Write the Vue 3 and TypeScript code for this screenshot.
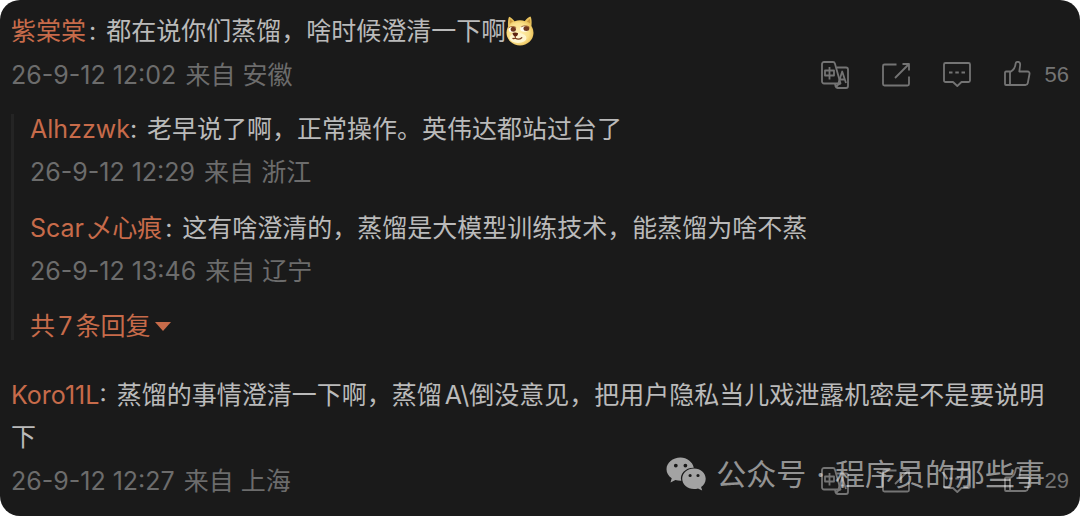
<script setup lang="ts">
interface Reply {
  id: number
  user: string
  cjkName: boolean
  text: string
  time: string
  region: string
}

interface Comment extends Reply {
  doge: boolean
  likes: number
  replies: Reply[]
  replyTotal: number
}

const comments: Comment[] = [
  {
    id: 1,
    user: '紫棠棠',
    cjkName: true,
    text: '都在说你们蒸馏，啥时候澄清一下啊',
    doge: true,
    time: '26-9-12 12:02',
    region: '安徽',
    likes: 56,
    replyTotal: 7,
    replies: [
      {
        id: 11,
        user: 'Alhzzwk',
        cjkName: false,
        text: '老早说了啊，正常操作。英伟达都站过台了',
        time: '26-9-12 12:29',
        region: '浙江',
      },
      {
        id: 12,
        user: 'Scar乄心痕',
        cjkName: true,
        text: '这有啥澄清的，蒸馏是大模型训练技术，能蒸馏为啥不蒸',
        time: '26-9-12 13:46',
        region: '辽宁',
      },
    ],
  },
  {
    id: 2,
    user: 'Koro11L',
    cjkName: false,
    text: '蒸馏的事情澄清一下啊，蒸馏A\\倒没意见，把用户隐私当儿戏泄露机密是不是要说明下',
    doge: false,
    time: '26-9-12 12:27',
    region: '上海',
    likes: 29,
    replyTotal: 0,
    replies: [],
  },
]
</script>

<template>
  <main class="card">
    <article v-for="c in comments" :key="c.id" class="comment">
      <p class="body">
        <a href="#" class="user">{{ c.user }}</a><span class="colon" :class="{ wide: c.cjkName }">:</span>{{ c.text }}<svg
          v-if="c.doge" class="doge" viewBox="0 0 28 30" role="img" aria-label="doge">
          <defs>
            <radialGradient id="fur" cx="45%" cy="50%" r="58%">
              <stop offset="0" stop-color="#fff0b5" />
              <stop offset="0.65" stop-color="#fae08a" />
              <stop offset="1" stop-color="#e8bc52" />
            </radialGradient>
          </defs>
          <path d="M2 11C1.800 6 2.200 2 3.200 .8 5 1.500 7.500 3.500 9 6ZM18.500 5.500C20.500 3 23 .8 24.500 .6c1.200 2 1.400 6 .8 10.400Z" fill="#e9c35e" />
          <path d="M3.800 7.500C3.700 5.300 3.800 4 4.200 3.200 5.400 3.800 6.400 4.900 7 5.800ZM21 5.800c.9-1.400 2-2.400 2.900-2.700.4 1.200.5 2.700.3 4.300Z" fill="#c9983f" />
          <ellipse cx="14" cy="16.800" rx="13.500" ry="12.600" fill="url(#fur)" />
          <ellipse cx="12" cy="22" rx="8.500" ry="5" fill="#fff6cf" />
          <ellipse cx="6.300" cy="13.500" rx="3.600" ry="2.900" fill="#fffdf2" />
          <ellipse cx="18.500" cy="12.800" rx="4.300" ry="3" fill="#fffdf2" />
          <ellipse cx="7.300" cy="13.300" rx="2.600" ry="2.500" fill="#70371f" />
          <ellipse cx="20.400" cy="12.500" rx="2.900" ry="2.500" fill="#70371f" />
          <path d="M3 11.500c1.500-1.200 4.500-1.600 6.800-.2M15.500 10.700c2.200-1.400 5.500-1.300 7.700.3" fill="none" stroke="#a66b36" stroke-width="1" stroke-linecap="round" />
          <path d="M6.500 17c1.500-.9 4-.8 5.600.2-.2 2.100-1.500 3.300-2.800 3.300S6.800 19.200 6.500 17Z" fill="#5c2413" />
          <path d="M9.300 20v2.200c2.200 1.300 4.700 1 6.500-.5M9.300 22.200c-.9.500-1.600.5-2.400.2" fill="none" stroke="#7a3b1d" stroke-width="1.200" stroke-linecap="round" />
        </svg>
      </p>

      <div class="foot">
        <div class="meta"><time>{{ c.time }}</time> 来自 {{ c.region }}</div>
        <div class="actions">
          <button type="button" aria-label="翻译">
            <svg viewBox="0 0 28 28">
              <path d="M14.500 22.500H3A2 2 0 0 1 1 20.500V3A2 2 0 0 1 3 1h9a2 2 0 0 1 1.900 1.400l5.600 20.100Z" />
              <path d="M15.500 6.500H25a2 2 0 0 1 2 2V25a2 2 0 0 1-2 2H16.500a2 2 0 0 1-1.900-1.500l-.6-3M14.700 25l4.500-2.500M15 26.500l3-4" />
              <path d="M4 9.500h9v5H4ZM8.500 6v12.500M17.500 22l3.700-11.500L25 22M18.800 18.500h5" />
            </svg>
          </button>
          <button type="button" aria-label="转发">
            <svg viewBox="0 0 28 28">
              <path d="M14.500 3.500H2.500a1.500 1.500 0 0 0-1.500 1.500v18a1.500 1.500 0 0 0 1.500 1.500h23A1.500 1.500 0 0 0 27 23V15.500M13 17 26.500 3.500M20.500 3H27V9.500" />
            </svg>
          </button>
          <button type="button" aria-label="评论">
            <svg viewBox="0 0 28 28">
              <path d="M2.500 2h23A1.500 1.500 0 0 1 27 3.500v16a1.500 1.500 0 0 1-1.500 1.500H18.500l-4.200 4-4.300-4H2.500A1.500 1.500 0 0 1 1 19.500V3.500A1.500 1.500 0 0 1 2.500 2Z" />
              <path d="M6 11.500h3.500M12.300 11.500h3.500M18.500 11.500H22" />
            </svg>
          </button>
          <button type="button" class="like" :aria-label="`赞 ${c.likes}`">
            <svg viewBox="0 0 28 28">
              <path d="M2 10.500h5c3-1.800 4.300-4.300 4.600-7.800C11.800 1.300 12.800.8 13.800.8c1.800 0 2.600 1.400 2.300 3.700L15.300 10.500H23.500c1.400 0 2.300 1.100 2 2.500l-1.700 9a2.500 2.500 0 0 1-2.400 2H2a1 1 0 0 1-1-1V11.500a1 1 0 0 1 1-1ZM6 10.800V24" />
            </svg>
            <span>{{ c.likes }}</span>
          </button>
        </div>
      </div>

      <section v-if="c.replies.length" class="replies">
        <div v-for="r in c.replies" :key="r.id" class="reply">
          <p class="line">
            <a href="#" class="user">{{ r.user }}</a><span class="colon" :class="{ wide: r.cjkName }">:</span>{{ r.text }}
          </p>
          <div class="meta"><time>{{ r.time }}</time> 来自 {{ r.region }}</div>
        </div>
        <button type="button" class="more">共{{ c.replyTotal }}条回复<span class="caret"></span></button>
      </section>
    </article>

    <div class="watermark">
      <svg viewBox="0 0 40 34" aria-hidden="true">
        <path fill-rule="evenodd" d="M14.500 .5C6.700 .5 .5 5.700.5 12.200c0 3.700 2 6.900 5.200 9L4.500 25.500l4.900-2.500c1.700.5 3.400.8 5.300.8h.6C13.300 17 19.500 10.500 27.800 10.700 26.500 4.800 21 .5 14.500 .5ZM9.800 6.700a1.900 1.900 0 1 1 0 3.800 1.900 1.900 0 0 1 0-3.800Zm9.600 0a1.900 1.900 0 1 1 0 3.800 1.900 1.900 0 0 1 0-3.800Z" />
        <path fill-rule="evenodd" d="M28 11.600c-6.600 0-11.800 4.600-11.800 10.200s5.200 10.200 11.800 10.200c1.400 0 2.800-.2 4-.6l4.200 2.100-1.100-3.500c2.800-1.800 4.600-4.800 4.600-8.200 0-5.600-5.100-10.200-11.700-10.200Zm-3.900 5.300a1.600 1.600 0 1 1 0 3.200 1.600 1.600 0 0 1 0-3.200Zm7.900 0a1.600 1.600 0 1 1 0 3.200 1.600 1.600 0 0 1 0-3.200Z" />
      </svg>
      <span>公众号</span><span>·</span><span>程序员的那些事</span>
    </div>
  </main>
</template>

<style>
body {
  background: #fff;
}
</style>

<style scoped>
.card {
  position: relative;
  box-sizing: border-box;
  padding: 10px 11px 20px;
  border-radius: 20px;
  background: #1a1a1a;
  color: #bababa;
  font-family: Inter, "Noto Sans CJK SC", sans-serif;
  font-size: 25px;
  text-autospace: normal;
}

.comment + .comment {
  margin-top: 34px;
}

.body,
.line {
  margin: 0;
}

.body {
  line-height: 42px;
}

.user {
  color: #c76b4a;
  text-decoration: none;
}

.colon {
  margin-right: 10px;
}

.colon.wide {
  margin-left: 3px;
}

.doge {
  width: 28px;
  height: 30px;
  vertical-align: -6px;
}

.foot {
  display: flex;
  align-items: center;
  justify-content: space-between;
  margin-top: 8px;
}

.meta {
  color: #6c6c6c;
  line-height: 30px;
}

.meta time {
  margin-right: 2px;
}

.actions {
  display: flex;
  align-items: center;
  gap: 33px;
}

button {
  display: flex;
  align-items: center;
  padding: 0;
  border: 0;
  background: none;
  color: inherit;
  font: inherit;
  cursor: pointer;
}

.actions button {
  color: #747474;
}

.actions svg {
  width: 28px;
  height: 28px;
  fill: none;
  stroke: currentColor;
  stroke-width: 1.8;
  stroke-linejoin: round;
}

.like {
  gap: 13px;
  font-family: "Liberation Sans", sans-serif;
  font-size: 22px;
}

.replies {
  display: flex;
  flex-direction: column;
  gap: 26px;
  margin-top: 24px;
  padding-left: 16px;
  border-left: 3px solid #242424;
}

.line {
  margin-bottom: 13px;
  line-height: 30px;
}

.more {
  gap: 5px;
  color: #c76b4a;
  line-height: 28px;
}

.caret {
  border: 8px solid transparent;
  border-top: 9px solid #c76b4a;
  border-bottom: 0;
}

.watermark {
  position: absolute;
  right: 35px;
  bottom: 20px;
  display: flex;
  align-items: center;
  gap: 10px;
  color: rgba(255, 255, 255, 0.55);
  font-size: 30px;
  line-height: 44px;
  pointer-events: none;
}

.watermark svg {
  width: 40px;
  height: 34px;
  fill: #a3a3a3;
}
</style>
